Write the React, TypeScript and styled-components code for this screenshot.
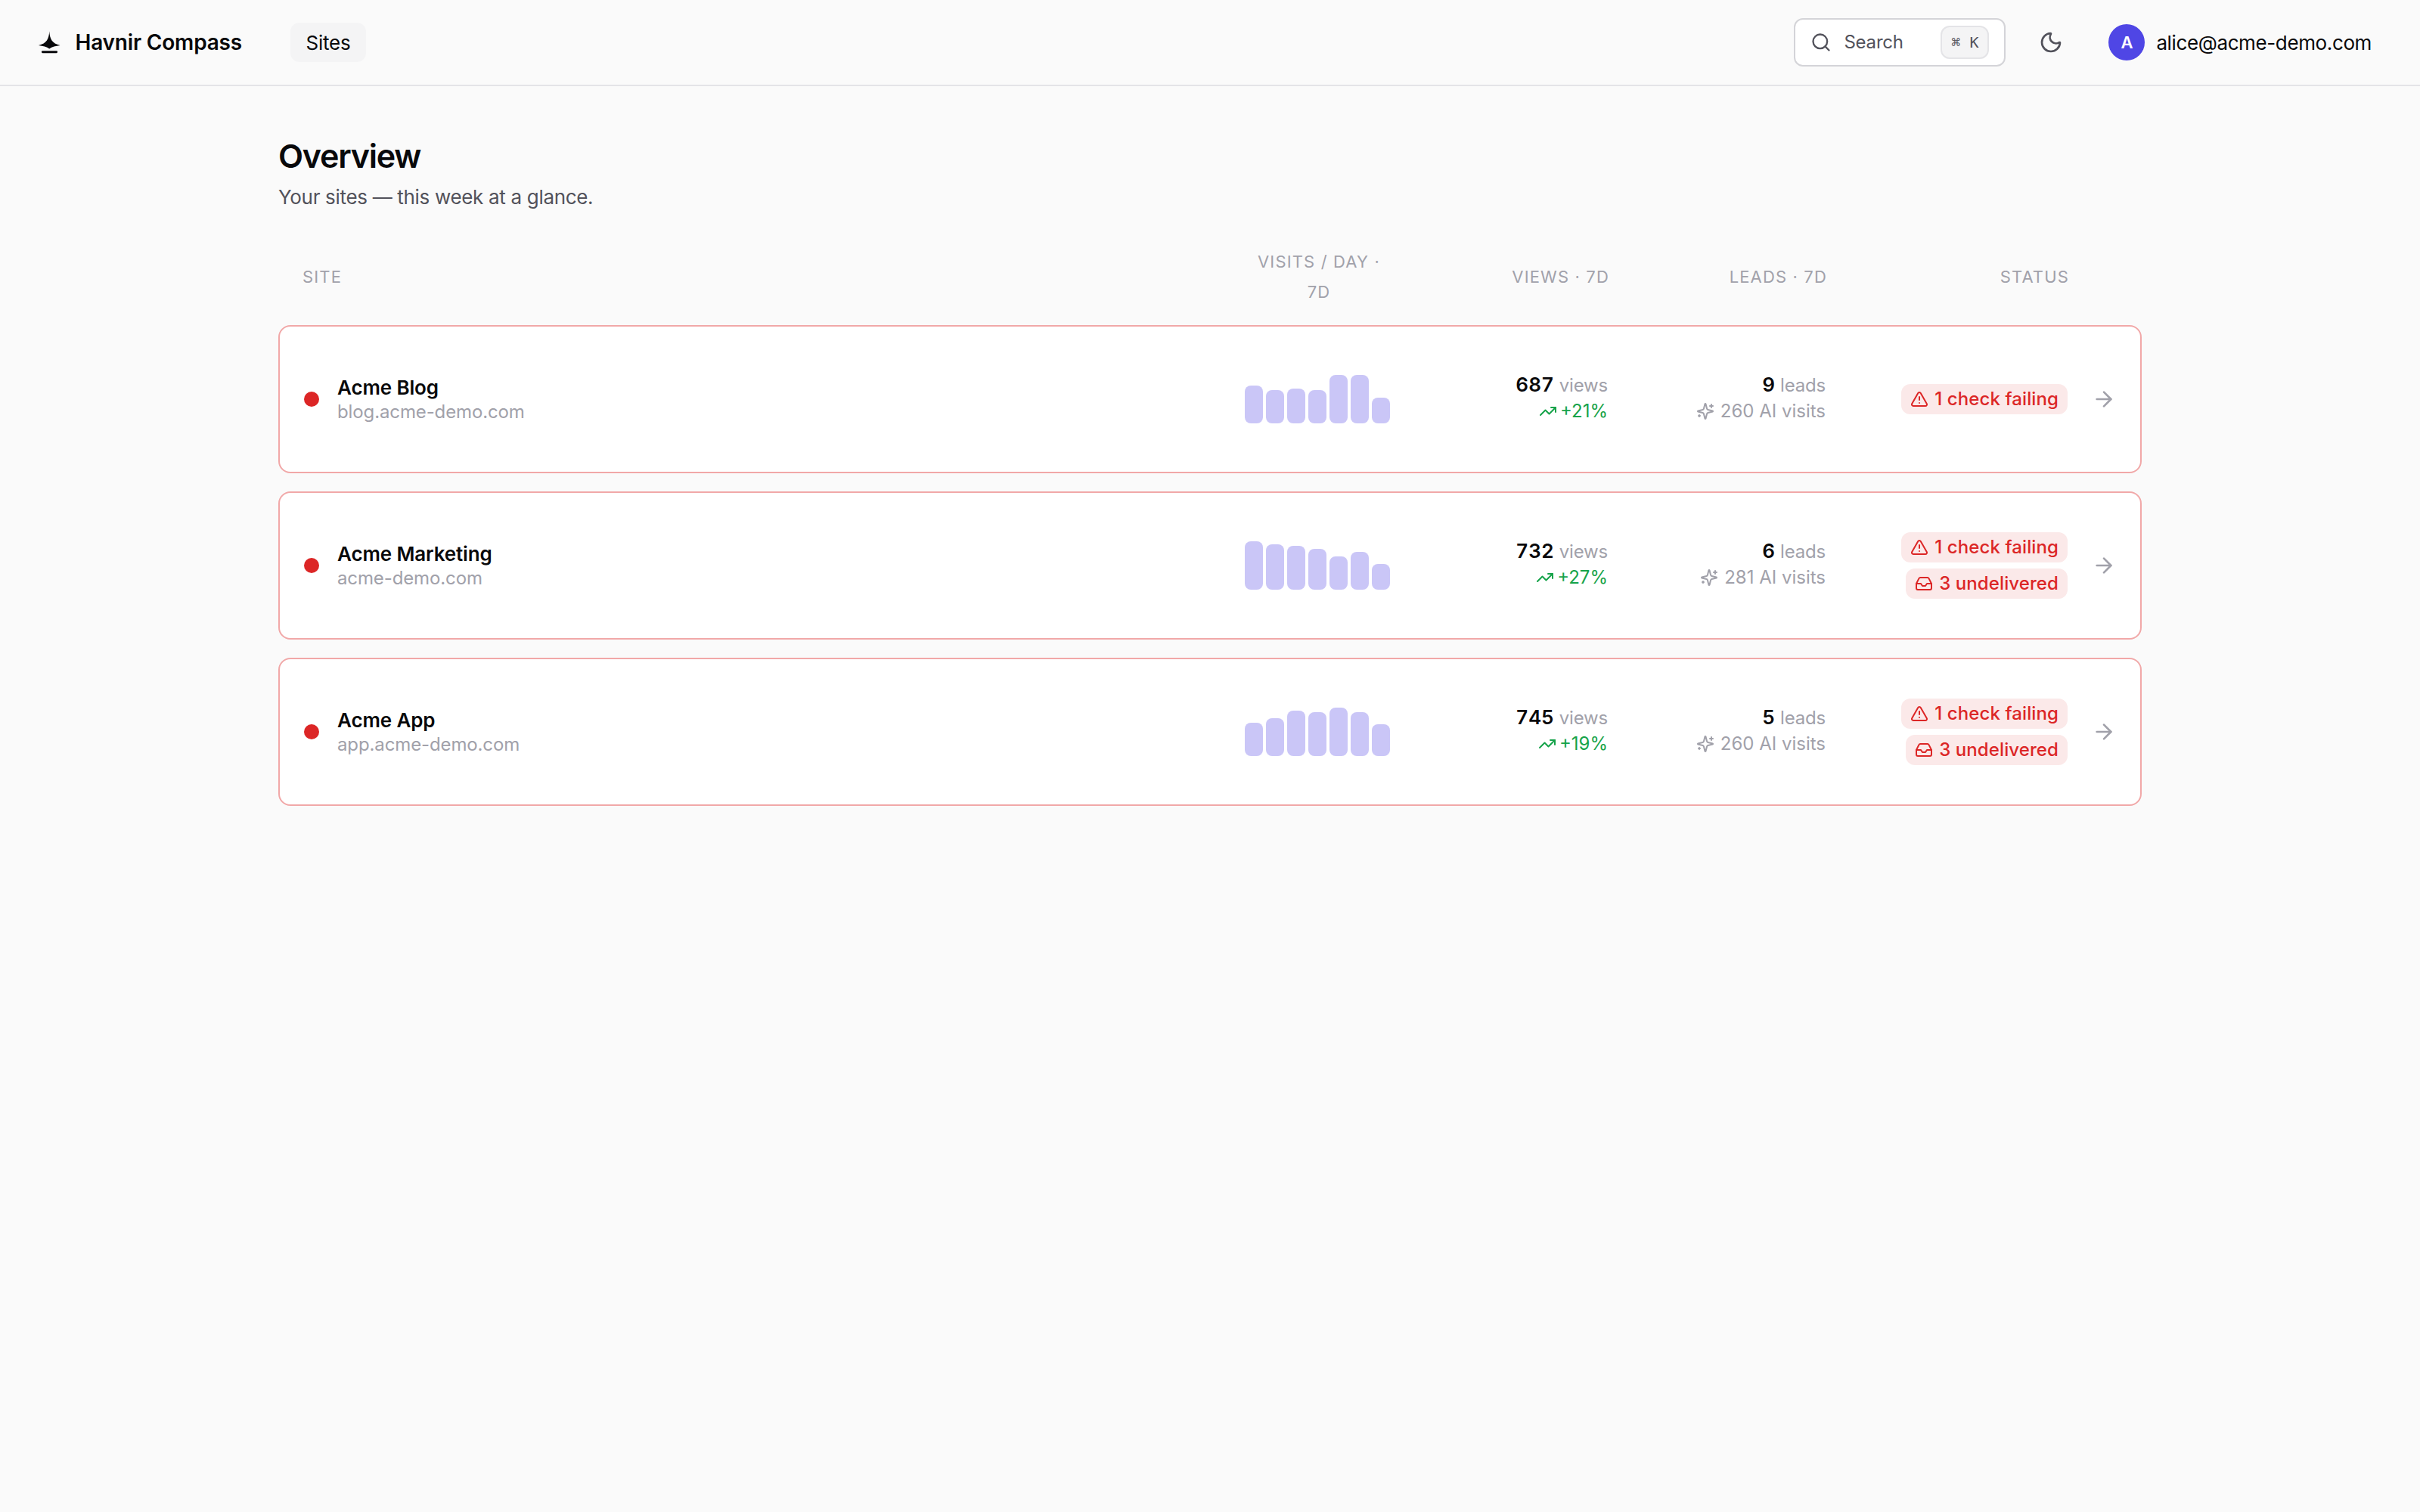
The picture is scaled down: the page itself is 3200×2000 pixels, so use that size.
import styled, { createGlobalStyle } from "styled-components";
import {
  ArrowRight,
  Inbox,
  Moon,
  Search,
  TrendingUp,
  TriangleAlert,
} from "lucide-react";

const GlobalStyle = createGlobalStyle`
  * {
    box-sizing: border-box;
  }

  body {
    margin: 0;
    background: #fafafa;
    color: #09090b;
    font-family: Inter, "Liberation Sans", sans-serif;
    font-size: 26px;
    line-height: 40px;
  }
`;

const Header = styled.header`
  display: flex;
  align-items: center;
  justify-content: space-between;
  height: 114px;
  padding: 0 64px 0 48px;
  border-bottom: 2px solid #e4e4e7;
`;

const HeaderGroup = styled.div`
  display: flex;
  align-items: center;
`;

const Brand = styled.a`
  display: flex;
  align-items: center;
  gap: 16px;
  width: 272px;
  font-size: 28px;
  font-weight: 600;
  letter-spacing: -0.18px;
  white-space: nowrap;
`;

const NavLink = styled.a`
  width: 100px;
  margin-left: 64px;
  padding: 7px 0 5px;
  border-radius: 12px;
  background: #f4f4f5;
  letter-spacing: -0.2px;
  text-align: center;
`;

const SearchButton = styled.button`
  display: flex;
  align-items: center;
  width: 280px;
  height: 64px;
  padding: 0 20px;
  border: 2px solid #d4d4d8;
  border-radius: 12px;
  background: #fff;
  color: #52525b;
  font: inherit;
  font-size: 24px;
  letter-spacing: -0.2px;

  span {
    margin-left: 16px;
  }
`;

const Kbd = styled.kbd`
  width: 64px;
  height: 44px;
  margin-left: auto;
  border: 2px solid #e4e4e7;
  border-radius: 12px;
  background: #f4f4f5;
  font-family: "DejaVu Sans Mono", monospace;
  font-size: 20px;
  line-height: 40px;
  letter-spacing: 0;
`;

const ThemeButton = styled.button`
  display: flex;
  margin: 0 60px 0 44px;
  padding: 0;
  border: 0;
  background: none;
  color: #52525b;
`;

const Avatar = styled.div`
  display: flex;
  align-items: center;
  justify-content: center;
  width: 48px;
  height: 48px;
  margin-right: 15px;
  border-radius: 50%;
  background: #4f46e5;
  color: #fff;
  font-size: 22px;
  font-weight: 600;
`;

const Email = styled.span`
  padding-top: 1px;
  letter-spacing: -0.38px;
`;

const Main = styled.main`
  width: 2464px;
  margin: 0 auto;
  padding-top: 64px;

  h1 {
    margin: 0;
    font-size: 43px;
    font-weight: 600;
    line-height: 56px;
    letter-spacing: -1.25px;
  }

  p {
    margin: 7px 0 0;
    color: #52525b;
    letter-spacing: -0.32px;
  }
`;

const Columns = styled.div`
  display: grid;
  grid-template-columns: 1fr 192px 256px 256px 288px 32px;
  align-items: center;
  column-gap: 32px;
`;

const TableHead = styled(Columns)`
  margin-top: 45px;
  padding: 0 32px;
  color: #a1a1aa;
  font-size: 22px;
  letter-spacing: 1.15px;
  text-transform: uppercase;
  text-align: right;

  span:first-child {
    text-align: left;
  }

  span:nth-child(2) {
    padding: 0 8px;
    text-align: center;
  }
`;

const SiteList = styled.div`
  display: flex;
  flex-direction: column;
  gap: 24px;
  margin-top: 24px;
`;

const SiteCard = styled(Columns)`
  height: 196px;
  padding: 0 32px;
  border: 2px solid #f1a8a8;
  border-radius: 16px;
  background: #fff;
  color: #a1a1aa;
`;

const SiteName = styled.div`
  display: flex;
  align-items: center;
  gap: 24px;
  font-size: 24px;
  line-height: 32px;
  letter-spacing: -0.12px;

  > div:last-child {
    padding-top: 2px;
  }

  strong {
    display: block;
    color: #09090b;
    font-size: 26px;
    font-weight: 600;
  }
`;

const Dot = styled.div`
  width: 20px;
  height: 20px;
  border-radius: 50%;
  background: #dc2626;
`;

const Bars = styled.div`
  display: flex;
  align-items: flex-end;
  gap: 4px;
  height: 64px;
`;

const Bar = styled.div`
  flex: 1;
  border-radius: 8px;
  background: #cac6f7;
`;

const Stat = styled.div`
  display: flex;
  flex-direction: column;
  align-items: flex-end;
  padding-bottom: 3px;
  font-size: 24px;
  line-height: 34px;
  letter-spacing: -0.2px;

  strong {
    margin-right: 7px;
    color: #09090b;
    font-size: 26px;
    font-weight: 600;
    font-variant-numeric: tabular-nums;
    letter-spacing: 0;
  }
`;

const StatNote = styled.div<{ $positive?: boolean }>`
  display: flex;
  align-items: center;
  gap: ${(props) => (props.$positive ? 4 : 8)}px;
  color: ${(props) => (props.$positive ? "#16a34a" : "#a1a1aa")};
  letter-spacing: 0;
`;

const Badges = styled.div`
  display: flex;
  flex-direction: column;
  align-items: flex-end;
  gap: 8px;
`;

const Badge = styled.span`
  display: flex;
  align-items: center;
  gap: 8px;
  height: 40px;
  padding: 0 12px;
  border-radius: 12px;
  background: #fbe9e9;
  color: #dc2626;
  font-size: 24px;
  font-weight: 500;
  letter-spacing: 0.1px;
`;

interface Site {
  name: string;
  domain: string;
  bars: number[];
  views: number;
  change: string;
  leads: number;
  aiVisits: number;
  undelivered?: number;
}

const sites: Site[] = [
  {
    name: "Acme Blog",
    domain: "blog.acme-demo.com",
    bars: [50, 44, 46, 44, 64, 64, 34],
    views: 687,
    change: "+21%",
    leads: 9,
    aiVisits: 260,
  },
  {
    name: "Acme Marketing",
    domain: "acme-demo.com",
    bars: [64, 60, 58, 54, 44, 50, 34],
    views: 732,
    change: "+27%",
    leads: 6,
    aiVisits: 281,
    undelivered: 3,
  },
  {
    name: "Acme App",
    domain: "app.acme-demo.com",
    bars: [44, 50, 60, 58, 64, 58, 42],
    views: 745,
    change: "+19%",
    leads: 5,
    aiVisits: 260,
    undelivered: 3,
  },
];

function Logo() {
  return (
    <svg width="36" height="36" viewBox="0 0 36 36" fill="currentColor">
      <path d="M17.5 3C18 13 21 19.500 32 22C26 22.800 21 24 17.500 26.500C14 24 9 22.800 3 22C14 19.500 17 13 17.500 3Z" />
      <rect x="7" y="29.500" width="21.500" height="3" rx="1.500" />
    </svg>
  );
}

function SparklesIcon() {
  return (
    <svg
      width="24"
      height="24"
      viewBox="0 0 24 24"
      fill="none"
      stroke="currentColor"
      strokeWidth="2"
      strokeLinecap="round"
      strokeLinejoin="round"
    >
      <path d="M9.937 15.5A2 2 0 0 0 8.5 14.063l-6.135-1.582a.5.5 0 0 1 0-.962L8.5 9.936A2 2 0 0 0 9.937 8.5l1.582-6.135a.5.5 0 0 1 .963 0L14.063 8.5A2 2 0 0 0 15.5 9.937l6.135 1.581a.5.5 0 0 1 0 .964L15.5 14.063a2 2 0 0 0-1.437 1.437l-1.582 6.135a.5.5 0 0 1-.963 0z" />
      <path d="M20 3v4M22 5h-4M4 17v2M5 18H3" />
    </svg>
  );
}

function SiteRow({ site }: { site: Site }) {
  return (
    <SiteCard>
      <SiteName>
        <Dot />
        <div>
          <strong>{site.name}</strong>
          {site.domain}
        </div>
      </SiteName>
      <Bars>
        {site.bars.map((height, i) => (
          <Bar key={i} style={{ height }} />
        ))}
      </Bars>
      <Stat>
        <div>
          <strong>{site.views}</strong>views
        </div>
        <StatNote $positive>
          <TrendingUp size={24} />
          {site.change}
        </StatNote>
      </Stat>
      <Stat>
        <div>
          <strong>{site.leads}</strong>leads
        </div>
        <StatNote>
          <SparklesIcon />
          {site.aiVisits} AI visits
        </StatNote>
      </Stat>
      <Badges>
        <Badge>
          <TriangleAlert size={24} />1 check failing
        </Badge>
        {site.undelivered && (
          <Badge>
            <Inbox size={24} />
            {site.undelivered} undelivered
          </Badge>
        )}
      </Badges>
      <ArrowRight size={32} />
    </SiteCard>
  );
}

function App() {
  return (
    <>
      <GlobalStyle />
      <Header>
        <HeaderGroup>
          <Brand>
            <Logo />
            Havnir Compass
          </Brand>
          <NavLink>Sites</NavLink>
        </HeaderGroup>
        <HeaderGroup>
          <SearchButton>
            <Search size={28} />
            <span>Search</span>
            <Kbd>⌘ K</Kbd>
          </SearchButton>
          <ThemeButton>
            <Moon size={32} />
          </ThemeButton>
          <Avatar>A</Avatar>
          <Email>alice@acme-demo.com</Email>
        </HeaderGroup>
      </Header>
      <Main>
        <h1>Overview</h1>
        <p>Your sites — this week at a glance.</p>
        <TableHead>
          <span>Site</span>
          <span>Visits / day · 7d</span>
          <span>Views · 7d</span>
          <span>Leads · 7d</span>
          <span>Status</span>
        </TableHead>
        <SiteList>
          {sites.map((site) => (
            <SiteRow key={site.name} site={site} />
          ))}
        </SiteList>
      </Main>
    </>
  );
}

export default App;
